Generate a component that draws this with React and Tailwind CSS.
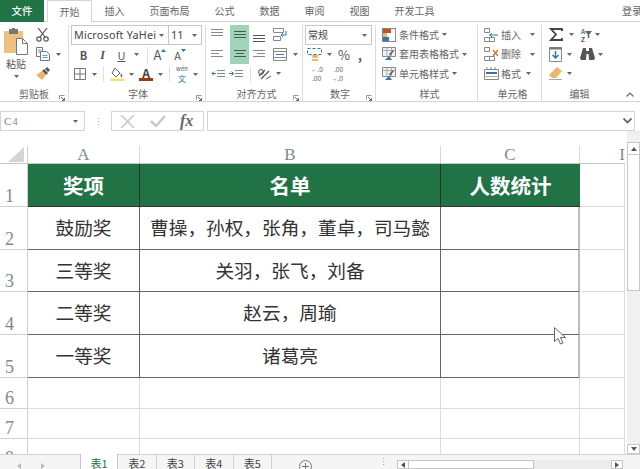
const tabs = ['插入', '页面布局', '公式', '数据', '审阅', '视图', '开发工具']

const Caret = ({ className = '' }) => (
  <svg width="5" height="3" viewBox="0 0 5 3" className={className}><path d="M0 0h5L2.500 3z" fill="#666" /></svg>
)

const Launcher = () => (
  <svg width="6" height="6" viewBox="0 0 6 6"><path d="M.5 .5h5M.5 .5v4" stroke="#999" fill="none" /><path d="M2 2l3.500 3.500M5.500 3v2.500H3" stroke="#666" fill="none" /></svg>
)

const Lines = ({ ys, x = [[0, 12], [0, 12], [0, 12]], dark }) => (
  <svg width="12" height="14" viewBox="0 0 12 14">
    {ys.map((y, i) => <path key={i} d={`M${x[i][0]} ${y}H${x[i][1]}`} stroke={dark ? '#555' : '#888'} />)}
  </svg>
)

const Paste = () => (
  <svg width="26" height="27" viewBox="0 0 26 27">
    <rect x="1" y="3" width="19" height="22" rx="1" fill="#f0c080" />
    <rect x="6" y="1" width="9" height="5" fill="#777" />
    <rect x="9" y="0" width="3" height="2" fill="#777" />
    <path d="M13.500 10.500h6l5 5v11h-11z" fill="#fff" stroke="#777" />
    <path d="M19.500 10.500v5h5" fill="none" stroke="#777" />
  </svg>
)

const Scissors = () => (
  <svg width="13" height="14" viewBox="0 0 13 14" fill="none" stroke="#555" strokeWidth="1.200">
    <path d="M2 0l7 9M11 0L4 9" />
    <circle cx="3" cy="11" r="2.200" />
    <circle cx="10" cy="11" r="2.200" />
  </svg>
)

const Copy = () => (
  <svg width="14" height="14" viewBox="0 0 14 14" fill="#fff" stroke="#777">
    <path d="M.5 .5h6v9h-6z" />
    <path d="M4.500 4.500h6l3 3v6h-9z" />
    <path d="M2 3h3M2 5h2M6.500 8.500h5M6.500 10.500h5" stroke="#5b9bd5" />
  </svg>
)

const Brush = () => (
  <svg width="14" height="13" viewBox="0 0 14 13">
    <path d="M8 2l4 4-2 2-4-4z" fill="#555" />
    <path d="M11 0l3 3-2 2-3-3z" fill="#555" />
    <path d="M6 4l4 4-4 5-6-5z" fill="#f0b46c" />
  </svg>
)

const GridIcon = () => (
  <svg width="12" height="12" viewBox="0 0 12 12" fill="none" stroke="#777"><path d="M.5 .5h11v11H.5zM6 .5v11M.5 6h11" /></svg>
)

const Fill = () => (
  <svg width="14" height="14" viewBox="0 0 14 14">
    <path d="M5 1l5 5-4 4-4-4z" fill="#fff" stroke="#666" />
    <path d="M11 6c1 2 2 3 1 4s-2-1-1-4z" fill="#666" />
    <rect x="0" y="11.500" width="14" height="2.500" fill="#f5e26a" />
  </svg>
)

const FontColor = () => (
  <div className="flex h-[14px] w-[14px] flex-col items-center">
    <span className="h-[11px] text-[12px] leading-[11px] font-bold text-[#444]">A</span>
    <span className="mt-auto h-[3px] w-[14px] bg-[#a5370c]"></span>
  </div>
)

const Phonetic = () => (
  <div className="flex w-[14px] flex-col items-center text-[#555]">
    <span className="text-[6px] leading-[8px]">wén</span>
    <span className="text-[8px] leading-[11px] text-[#2e75b6]">文</span>
  </div>
)

const GrowA = ({ size, up }) => (
  <div className="flex w-[16px] items-start justify-center">
    <span className={`leading-[16px] text-[#555] ${size}`}>A</span>
    <svg width="5" height="3" viewBox="0 0 5 3" className="mt-[2px]">
      <path d={up ? 'M0 3h5L2.500 0z' : 'M0 0h5L2.500 3z'} fill="#2e75b6" />
    </svg>
  </div>
)

const Indent = ({ flip }) => (
  <svg width="14" height="10" viewBox="0 0 14 10">
    <path d="M6 1.500h8M6 4.500h8M6 7.500h8" stroke="#888" />
    {flip
      ? <path d="M0 4.500h4M2.500 2.500l2 2-2 2" stroke="#2e75b6" fill="none" />
      : <path d="M5 4.500H1M3 2.500l-2 2 2 2" stroke="#2e75b6" fill="none" />}
  </svg>
)

const Orient = () => (
  <svg width="15" height="14" viewBox="0 0 15 14" fill="none">
    <path d="M2 9l6-6M4 12l8-8" stroke="#666" strokeWidth="1.500" />
    <path d="M9 12l5-3" stroke="#555" />
    <circle cx="4" cy="5" r="2.500" stroke="#555" />
  </svg>
)

const WrapIcon = () => (
  <svg width="14" height="13" viewBox="0 0 14 13" fill="none">
    <path d="M.5 .5h10v4H.5zM.5 8.500h7v4h-7z" stroke="#888" />
    <path d="M13 3v4H8M10 5L8 7l2 2" stroke="#2e75b6" />
  </svg>
)

const MergeIcon = () => (
  <svg width="14" height="13" viewBox="0 0 14 13" fill="none" stroke="#888">
    <path d="M.5 .5h13v12H.5zM.5 3.500h13M.5 9.500h13" />
    <path d="M3 6.500h8" stroke="#2e75b6" />
  </svg>
)

const CondIcon = () => (
  <svg width="14" height="14" viewBox="0 0 14 14">
    <rect x=".5" y=".5" width="13" height="13" fill="#fff" stroke="#888" />
    <rect x="1" y="1" width="8" height="4" fill="#c0561e" />
    <rect x="1" y="5" width="4" height="4" fill="#f0b46c" />
    <rect x="1" y="9" width="6" height="4" fill="#2e75b6" />
  </svg>
)

const TableIcon = () => (
  <svg width="15" height="14" viewBox="0 0 15 14">
    <path d="M.5 .5h13v9H.5z" fill="#f2f2f2" stroke="#888" />
    <path d="M.5 3.500h13M5 .5v9M9.500 .5v9" stroke="#aaa" />
    <path d="M7 7l4-4 1 1-4 5z" fill="#666" />
    <path d="M3 13l4-4 3 4z" fill="#2e75b6" />
  </svg>
)

const CellIcon = ({ accent }) => (
  <svg width="16" height="14" viewBox="0 0 16 14" fill="none">
    <path d="M.5 .5h5v4h-5zM.5 9.500h5v4h-5zM5.500 .5v4M5.500 9.500h5v4h-5z" stroke="#888" />
    {accent === 'in' && <path d="M5 7h9M8 5L6 7l2 2" stroke="#2e75b6" />}
    {accent === 'del' && <path d="M9 3l5 6M14 3L9 9" stroke="#d07030" strokeWidth="1.300" />}
  </svg>
)

const FormatIcon = () => (
  <svg width="15" height="13" viewBox="0 0 15 13" fill="none">
    <path d="M.5 2.500h14v10H.5z" stroke="#888" />
    <path d="M3 0v2M7 0v2M11 0v2" stroke="#888" />
    <path d="M2 5h11v2H2z" fill="#2e75b6" />
    <path d="M.5 9.500h14" stroke="#aaa" />
  </svg>
)

const Sigma = () => (
  <svg width="14" height="13" viewBox="0 0 14 13"><path d="M13 3V1H2l5 5.500L2 12h11v-2" fill="none" stroke="#444" strokeWidth="1.800" /></svg>
)

const SortIcon = () => (
  <div className="flex items-center">
    <div className="flex flex-col text-[6.500px] leading-[8px] font-semibold">
      <span className="text-[#2e75b6]">A</span>
      <span className="text-[#555]">Z</span>
    </div>
    <svg width="7" height="7" viewBox="0 0 7 7"><path d="M0 0h7L4.300 3.500V7H2.700V3.500z" fill="#666" /></svg>
  </div>
)

const FillDown = () => (
  <svg width="13" height="15" viewBox="0 0 13 15" fill="none">
    <path d="M.5 .5h12v14H.5z" stroke="#888" />
    <path d="M.5 .5h12v2H.5z" fill="#777" />
    <path d="M6.500 4v7M3.500 8l3 3 3-3" stroke="#2e75b6" strokeWidth="1.500" />
  </svg>
)

const Binoculars = () => (
  <svg width="15" height="12" viewBox="0 0 15 12" fill="#555">
    <path d="M3 0h3v3h3V0h3l3 10-1 2H9L8.500 6h-2L6 12H1L0 10z" />
  </svg>
)

const Eraser = () => (
  <svg width="13" height="13" viewBox="0 0 13 13">
    <path d="M8 0l5 4-6 7H3L0 8z" fill="#f0b46c" />
    <path d="M0 12.500h13" stroke="#aaa" />
  </svg>
)

const RibbonRow = ({ className = '', children }) => (
  <div className={`flex h-[19.500px] items-center ${className}`}>{children}</div>
)

const Sep = ({ className = '' }) => <span className={`h-[16px] w-px bg-[#e1e1e1] ${className}`}></span>

const Group = ({ className, label, launcher, children }) => (
  <div className={`flex shrink-0 flex-col border-r border-[#dcdcdc] ${className}`}>
    <div className="h-[62px]">{children}</div>
    <div className="relative flex h-[14px] items-center justify-center text-[10px] leading-none text-[#666]">
      {label}
      {launcher && <span className="absolute right-[3px] bottom-0 flex"><Launcher /></span>}
    </div>
  </div>
)

const MenuRow = ({ icon, text, caretClass = 'ml-[3px]' }) => (
  <RibbonRow>
    <span className="flex w-[17px] shrink-0 justify-start">{icon}</span>
    <span className="text-[10px] leading-none text-[#666]">{text}</span>
    <Caret className={caretClass} />
  </RibbonRow>
)

const Ribbon = () => (
  <div className="flex h-[80px] shrink-0 border-b border-[#d4d4d4] pt-[3px]">
    <Group className="w-[69px]" label="剪贴板" launcher>
      <div className="flex">
        <div className="flex w-[36px] flex-col items-center pt-[3px] pr-[4px]">
          <Paste />
          <span className="mt-[3px] text-[10px] leading-[12px] text-[#555]">粘贴</span>
          <Caret className="mt-[5px]" />
        </div>
        <div className="flex flex-col">
          <RibbonRow><Scissors /></RibbonRow>
          <RibbonRow><Copy /><Caret className="ml-[6px]" /></RibbonRow>
          <RibbonRow><Brush /></RibbonRow>
        </div>
      </div>
    </Group>

    <Group className="w-[137px] pl-[2px]" label="字体" launcher>
      <div className="flex h-[20px] w-[131px] border border-[#c6c6c6]">
        <div className="flex w-[97px] items-center justify-between border-r border-[#c6c6c6] pr-[4px] pl-[2px]">
          <span className="font-['Noto_Sans',sans-serif] text-[10.800px] tracking-[.2px] whitespace-nowrap text-[#444]">Microsoft YaHei</span>
          <Caret />
        </div>
        <div className="flex flex-1 items-center justify-between pr-[4px] pl-[2px]">
          <span className="font-['Noto_Sans',sans-serif] text-[11px] text-[#444]">11</span>
          <Caret />
        </div>
      </div>
      <RibbonRow className="pl-[3px]">
        <span className="w-[19px] text-center text-[11px] font-bold text-[#555]">B</span>
        <span className="w-[19px] text-center font-['Liberation_Serif',serif] text-[12px] font-bold text-[#555] italic">I</span>
        <span className="w-[19px] text-center text-[11px] text-[#555] underline">U</span>
        <Caret className="ml-[3px]" />
        <Sep className="ml-[8px]" />
        <span className="ml-[4px] flex"><GrowA size="text-[13px]" up /></span>
        <span className="ml-[4px] flex"><GrowA size="text-[11px]" /></span>
      </RibbonRow>
      <RibbonRow className="pl-[3px]">
        <GridIcon />
        <Caret className="ml-[6px]" />
        <Sep className="ml-[6px]" />
        <span className="ml-[6px] flex"><Fill /></span>
        <Caret className="ml-[5px]" />
        <span className="ml-[5px] flex"><FontColor /></span>
        <Caret className="ml-[5px]" />
        <Sep className="ml-[6px]" />
        <span className="ml-[5px] flex"><Phonetic /></span>
        <Caret className="ml-[4px]" />
      </RibbonRow>
    </Group>

    <Group className="w-[97px] pl-[5px]" label="对齐方式" launcher>
      <div className="flex">
        <div className="grid grid-cols-[19px_19px_19px] grid-rows-[19.500px_19.500px]">
          <span className="flex items-center justify-start"><Lines ys={[1.5, 4.5, 7.5]} /></span>
          <span className="flex items-center justify-center bg-[#9fd5b7]"><Lines ys={[3.5, 6.5, 9.5]} dark /></span>
          <span className="flex items-center justify-center"><Lines ys={[7.5, 10.5, 13.5]} dark /></span>
          <span className="flex items-center justify-start"><Lines ys={[3.5, 6.5, 9.5]} x={[[0, 12], [0, 8], [0, 12]]} /></span>
          <span className="flex items-center justify-center bg-[#9fd5b7]"><Lines ys={[3.5, 6.5, 9.5]} x={[[0, 12], [2, 10], [0, 12]]} dark /></span>
          <span className="flex items-center justify-center"><Lines ys={[3.5, 6.5, 9.5]} x={[[0, 12], [4, 12], [0, 12]]} /></span>
        </div>
        <div className="ml-[5px] flex flex-col">
          <RibbonRow><WrapIcon /></RibbonRow>
          <RibbonRow><MergeIcon /><Caret className="ml-[6px]" /></RibbonRow>
        </div>
      </div>
      <RibbonRow>
        <Indent />
        <span className="ml-[4px] flex"><Indent flip /></span>
        <Sep className="ml-[7px]" />
        <span className="ml-[6px] flex"><Orient /></span>
        <Caret className="ml-[4px]" />
      </RibbonRow>
    </Group>

    <Group className="w-[73px] pl-[2px]" label="数字" launcher>
      <div className="flex h-[20px] w-[67px] items-center justify-between border border-[#c6c6c6] pr-[4px] pl-[2px]">
        <span className="text-[10px] leading-none text-[#444]">常规</span>
        <Caret />
      </div>
      <RibbonRow className="pl-[2px]">
        <svg width="15" height="14" viewBox="0 0 15 14">
          <path d="M.5 .5h14v6H.5z" fill="#fff" stroke="#2e75b6" strokeDasharray="3 2" />
          <path d="M4 7h8l-2 3H6z" fill="#f0b46c" />
          <path d="M5 11h6v2H5z" fill="#f0b46c" />
        </svg>
        <Caret className="ml-[5px]" />
        <span className="ml-[6px] text-[13px] leading-none text-[#555]">%</span>
        <span className="ml-[8px] text-[12px] leading-none font-bold text-[#555]">,</span>
      </RibbonRow>
      <RibbonRow className="pl-[3px] font-['Noto_Sans',sans-serif] text-[6.500px] leading-[9px] text-[#666]">
        <div className="flex w-[23px] flex-col"><span className="pl-[3px]"><span className="text-[#2e75b6]">←</span>.0</span><span className="pl-[4px]">.00</span></div>
        <div className="flex w-[14px] flex-col"><span className="pl-[3px]">.00</span><span><span className="text-[#2e75b6]">→</span>.0</span></div>
      </RibbonRow>
    </Group>

    <Group className="w-[102px] pl-[6px]" label="样式">
      <MenuRow icon={<CondIcon />} text="条件格式" />
      <MenuRow icon={<TableIcon />} text="套用表格格式" />
      <MenuRow icon={<TableIcon />} text="单元格样式" />
    </Group>

    <Group className="w-[64px] pl-[6px]" label="单元格">
      <MenuRow icon={<CellIcon accent="in" />} text="插入" caretClass="ml-[9px]" />
      <MenuRow icon={<CellIcon accent="del" />} text="删除" caretClass="ml-[9px]" />
      <MenuRow icon={<FormatIcon />} text="格式" caretClass="ml-[5px]" />
    </Group>

    <div className="flex flex-1 flex-col pl-[7px]">
      <div className="h-[62px]">
        <RibbonRow><Sigma /><Caret className="ml-[6px]" /><span className="ml-[7px] flex"><SortIcon /></span><Caret className="ml-[3px]" /></RibbonRow>
        <RibbonRow><FillDown /><Caret className="ml-[5px]" /><span className="ml-[8px] flex"><Binoculars /></span><Caret className="ml-[3px]" /></RibbonRow>
        <RibbonRow><Eraser /><Caret className="ml-[5px]" /></RibbonRow>
      </div>
      <div className="relative flex h-[14px] items-center justify-center pr-[30px] text-[10px] leading-none text-[#666]">
        编辑
        <svg width="8" height="5" viewBox="0 0 8 5" className="absolute right-[6px]"><path d="M.5 4.500L4 1l3.500 3.500" fill="none" stroke="#666" strokeWidth="1.200" /></svg>
      </div>
    </div>
  </div>
)

const FormulaBar = () => (
  <div className="mt-[9px] flex h-[20px] shrink-0">
    <div className="flex w-[85px] items-center justify-between border border-[#d4d4d4] pr-[6px] pl-[3px]">
      <span className="font-['Liberation_Serif',serif] text-[11px] tracking-[1px] text-[#888]">C4</span>
      <Caret />
    </div>
    <div className="flex w-[26px] items-center justify-center text-[9px] leading-none text-[#999]">⋮</div>
    <div className="flex w-[93px] items-center border border-[#d4d4d4]">
      <svg width="15" height="13" viewBox="0 0 15 13" className="ml-[8px]"><path d="M1 0l13 13M14 0L1 13" stroke="#c8c8c8" strokeWidth="1.500" /></svg>
      <svg width="16" height="12" viewBox="0 0 16 12" className="ml-[15px]"><path d="M1 6l5 5L15 1" fill="none" stroke="#c8c8c8" strokeWidth="2.500" /></svg>
      <span className="ml-[14px] font-['Liberation_Serif',serif] text-[16px] leading-none font-bold text-[#666] italic">fx</span>
    </div>
    <div className="ml-[3px] flex w-[428px] items-center justify-end border border-[#d4d4d4] pr-[2px]">
      <svg width="9" height="6" viewBox="0 0 9 6"><path d="M.5 .5L4.500 4.500 8.500 .5" fill="none" stroke="#666" strokeWidth="1.800" /></svg>
    </div>
  </div>
)

const rows = [
  { h: 'h-[43px]', num: 1, cells: ['奖项', '名单', '人数统计'], head: true },
  { h: 'h-[43px]', num: 2, cells: ['鼓励奖', '曹操，孙权，张角，董卓，司马懿', ''] },
  { h: 'h-[42px]', num: 3, cells: ['三等奖', '关羽，张飞，刘备', ''] },
  { h: 'h-[43px]', num: 4, cells: ['二等奖', '赵云，周瑜', ''] },
  { h: 'h-[43px]', num: 5, cells: ['一等奖', '诸葛亮', ''] },
  { h: 'h-[31px]', num: 6 },
  { h: 'h-[30px]', num: 7 },
  { h: 'h-[30px]', num: 8 },
]

const colW = ['w-[112px]', 'w-[301px]', 'w-[139px]']

const SheetRow = ({ row }) => (
  <div className={`flex shrink-0 ${row.h}`}>
    <div className="flex w-[28px] items-end justify-center border-r border-b border-[#d0d0d0] pr-[8px] font-['Liberation_Serif',serif] text-[18px] leading-[20px] text-[#7d8b8b]">
      {row.num}
    </div>
    {[0, 1, 2].map((i) => {
      const line = i === 2 ? 'border-r-2 border-r-[#bdbdbd]' : 'border-r border-r-[#666]'
      if (!row.cells) {
        return <div key={i} className={`${colW[i]} border-r border-b border-[#dcdcdc]`}></div>
      }
      return row.head ? (
        <div key={i} className={`flex items-center justify-center border-b border-b-[#333] bg-[#217346] text-[20.500px] font-bold text-white ${colW[i]} ${i === 2 ? '' : 'border-r border-r-[#25352c]'}`}>
          {row.cells[i]}
        </div>
      ) : (
        <div key={i} className={`flex items-center justify-center border-b border-b-[#666] pb-[2px] text-[18.670px] text-[#333] ${colW[i]} ${line}`}>
          {row.cells[i]}
        </div>
      )
    })}
    <div className="w-[45px] border-r border-b border-[#dcdcdc]"></div>
  </div>
)

const Sheet = () => (
  <div className="flex h-[323px] shrink-0">
    <div className="flex w-[625px] flex-col overflow-hidden pt-[15px]">
      <div className="flex h-[18px] shrink-0 border-b border-[#c6c6c6]">
        <div className="flex w-[28px] items-end justify-end border-r border-[#d0d0d0] pr-[3px] pb-[1px]">
          <svg width="16" height="15" viewBox="0 0 16 15"><path d="M16 0v15H0z" fill="#d4d4d4" /></svg>
        </div>
        {['A', 'B', 'C'].map((c, i) => (
          <div key={c} className={`flex items-center justify-center border-r border-[#d8d8d8] font-['Liberation_Serif',serif] text-[17px] leading-none text-[#7d8b8b] ${colW[i]}`}>
            {c}
          </div>
        ))}
        <div className="flex w-[45px] items-center justify-end font-['Liberation_Serif',serif] text-[17px] leading-none text-[#7d8b8b]">I</div>
      </div>
      {rows.map((row) => <SheetRow key={row.num} row={row} />)}
    </div>

    <div className="ml-[2px] flex w-[13px] flex-col bg-[#f0f0f0] pt-[11px]">
      <div className="flex h-[13px] items-center justify-center border border-[#c6c6c6] bg-white">
        <svg width="6" height="4" viewBox="0 0 6 4"><path d="M0 4h6L3 0z" fill="#555" /></svg>
      </div>
      <div className="h-[136px] border-x border-b border-[#c6c6c6] bg-white"></div>
      <div className="flex-1"></div>
      <div className="flex h-[10px] items-center justify-center border border-[#c6c6c6] bg-white">
        <svg width="6" height="4" viewBox="0 0 6 4"><path d="M0 0h6L3 4z" fill="#555" /></svg>
      </div>
    </div>
  </div>
)

const SheetTabs = () => (
  <div className="flex h-[15px] shrink-0 items-start border-t border-[#d0d0d0] bg-[#f5f5f5] text-[11px] leading-[15px] text-[#444]">
    <div className="flex w-[80px] gap-[20px] pt-[8px] pl-[17px]">
      <svg width="4" height="6" viewBox="0 0 4 6"><path d="M4 0v6L0 3z" fill="#bbb" /></svg>
      <svg width="4" height="6" viewBox="0 0 4 6"><path d="M0 0v6l4-3z" fill="#bbb" /></svg>
    </div>
    <div className="-mt-px h-[15px] w-[38px] border-x border-[#c6c6c6] bg-white pt-[2px] text-center text-[#217346]">表1</div>
    {['表2', '表3', '表4', '表5'].map((t) => (
      <div key={t} className="h-[14px] w-[38.500px] border-r border-[#d0d0d0] pt-[1px] text-center">{t}</div>
    ))}
    <div className="ml-[27px] flex pt-[5px]">
      <svg width="13" height="13" viewBox="0 0 13 13" fill="none" stroke="#777"><circle cx="6.500" cy="6.500" r="6" /><path d="M6.500 3v7M3 6.500h7" /></svg>
    </div>
    <span className="ml-[67px] text-[9px] leading-[14px] text-[#999]">⋮</span>
    <div className="ml-[9px] flex h-[14px] w-[226px] items-end pt-[4px]">
      <div className="flex h-[9px] w-[12px] items-center justify-center border border-[#c6c6c6] bg-white">
        <svg width="4" height="6" viewBox="0 0 4 6"><path d="M4 0v6L0 3z" fill="#555" /></svg>
      </div>
      <div className="h-[9px] w-[125px] border-y border-r border-[#c6c6c6] bg-white"></div>
      <div className="h-[9px] flex-1 bg-[#ececec]"></div>
      <div className="flex h-[9px] w-[12px] items-center justify-center border border-[#c6c6c6] bg-white">
        <svg width="4" height="6" viewBox="0 0 4 6"><path d="M0 0v6l4-3z" fill="#555" /></svg>
      </div>
    </div>
  </div>
)

const App = () => {
  return (
    <div className="relative flex h-[469px] w-[640px] flex-col overflow-hidden bg-white font-['Noto_Sans_CJK_SC','Noto_Sans',sans-serif]">
      <div className="flex h-[22px] shrink-0 border-b border-[#d4d4d4] text-[10px] leading-none text-[#666]">
        <div className="flex h-[22px] w-[44px] items-center justify-center bg-[#217346] text-[10.500px] font-medium text-white">文件</div>
        <div className="ml-[3px] flex h-[22px] items-center border-x border-t border-[#d4d4d4] bg-white px-[11.500px]">开始</div>
        {tabs.map((t) => (
          <div key={t} className="flex items-center px-[12.500px]">{t}</div>
        ))}
        <div className="ml-auto -mr-[2px] flex items-center whitespace-nowrap">登录</div>
      </div>
      <Ribbon />
      <FormulaBar />
      <Sheet />
      <SheetTabs />
      <svg width="12" height="18" viewBox="0 0 12 18" className="absolute top-[327px] left-[554px]">
        <path d="M.5 .5v14l3.500-3 2.500 5.500 2.500-1-2.500-5.500h5z" fill="#fff" stroke="#666" />
      </svg>
    </div>
  )
}

export default App
